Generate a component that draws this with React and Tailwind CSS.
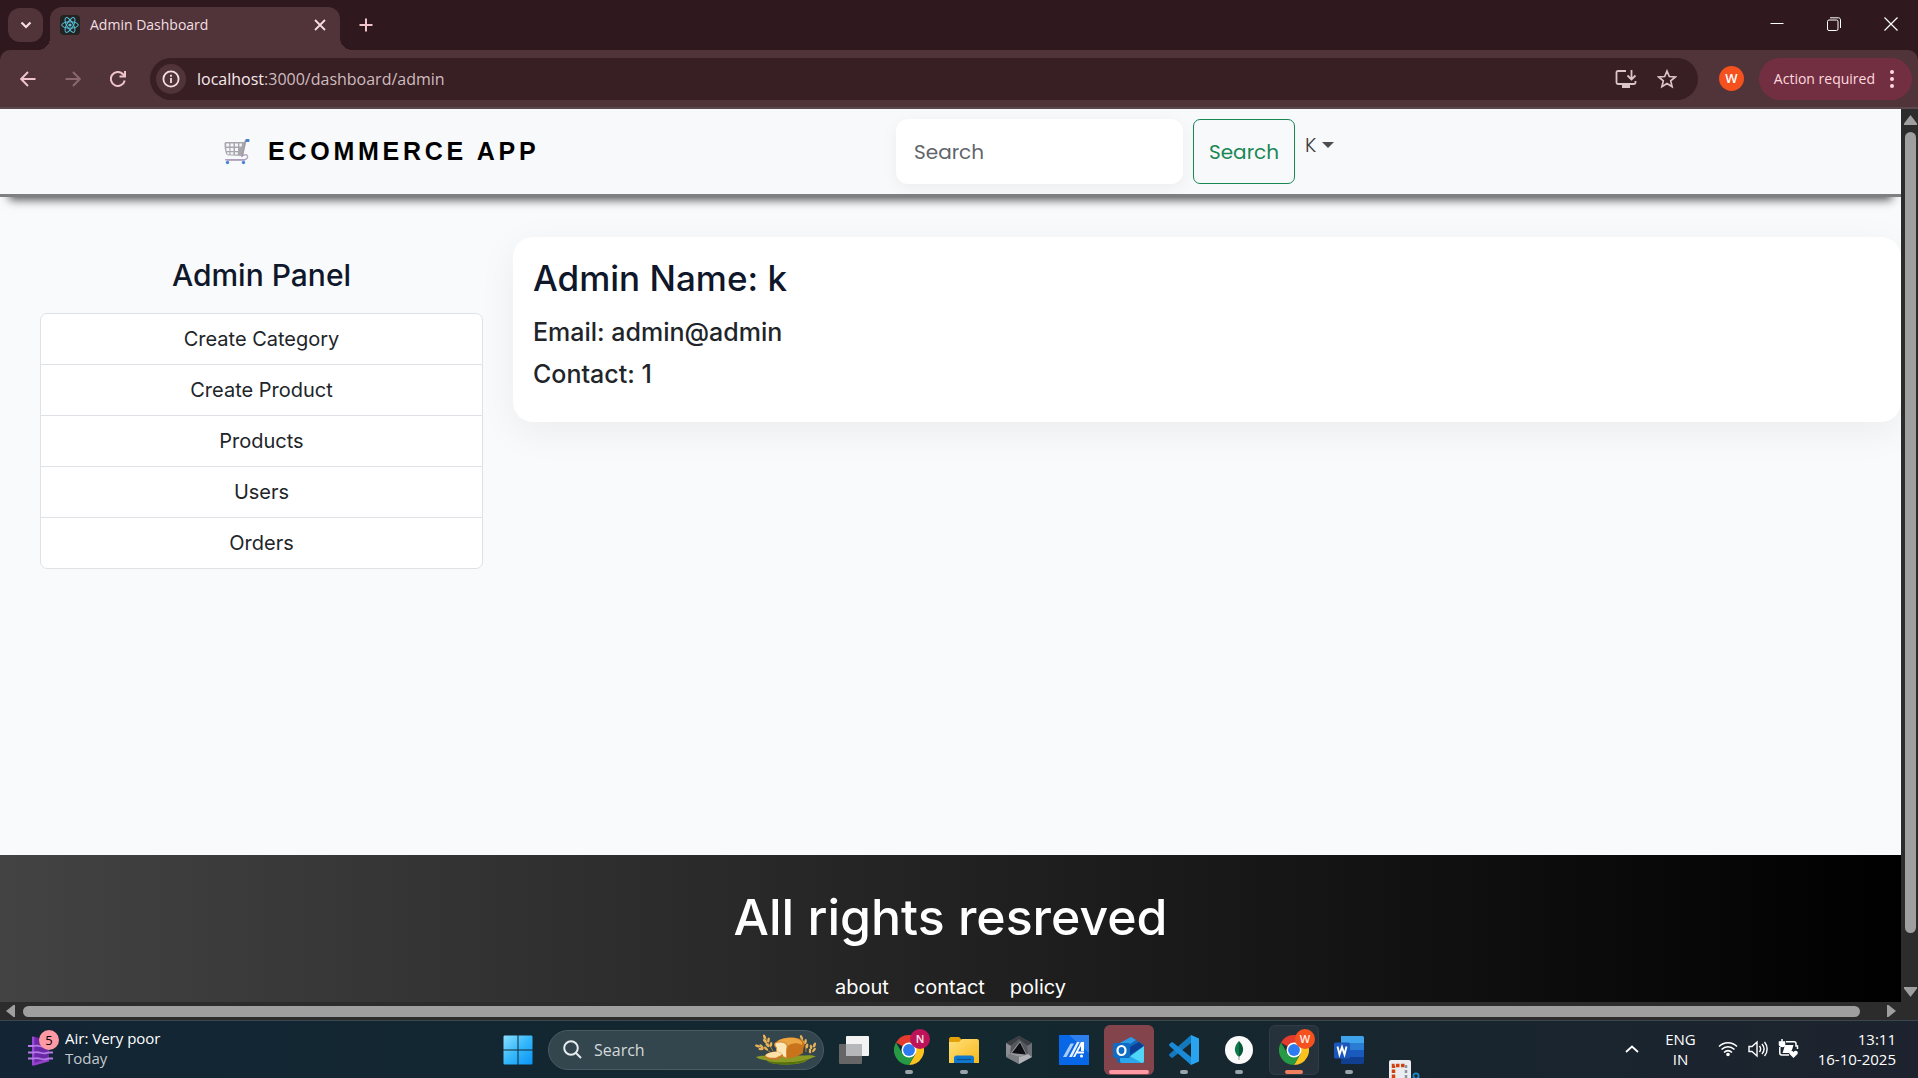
import React from "react";

const UI = "font-['Open_Sans','Noto_Sans',sans-serif]";
const INTER = "font-['Inter',sans-serif]";

const links = ["Create Category", "Create Product", "Products", "Users", "Orders"];

function CartIcon() {
  return (
    <svg width="27" height="27" viewBox="0 0 27 27" fill="none" aria-hidden="true">
      <path d="M1.500 5.500c0-1 .8-1.500 1.800-1.500H22l-3 14-14.500-.8C2.500 17 1.300 9 1.500 5.500z" fill="#aaa6ae" />
      <g fill="#f6f7fa">
        <path d="M3.200 5.600h3v3h-3zM7.500 5.600h3v3h-3zM12 5.600h3v3h-3zM16.400 5.600H19l-.4 3h-2.200zM3.400 10h2.900v3H3.400zM7.500 10h3v3h-3zM12 10h3v3h-3zM4.200 14.200h2.100v2H4.200zM7.500 14.200h3v2.200h-3zM12 14.200h2.800v2.400H12z" />
      </g>
      <path d="M25 2.500h-2.500L19 18c3-2 5-1.500 5.500 0 .8 2.500-2 4-5 4H4" stroke="#b7a6c6" strokeWidth="1.400" />
      <path d="M22.500 3 19 18.500" stroke="#a19da5" strokeWidth="1.800" />
      <path d="M2 21.800h20" stroke="#a99bb9" strokeWidth="1.300" />
      <rect x="22.500" y="1" width="4" height="3" rx="1" fill="#4a80c8" />
      <circle cx="4.500" cy="24.500" r="1.700" fill="#4a86d4" />
      <circle cx="20.500" cy="24.500" r="1.700" fill="#4a86d4" />
    </svg>
  );
}

function ReactLogo() {
  return (
    <svg width="18" height="18" viewBox="0 0 18 18" fill="none" stroke="#58c4dc" strokeWidth="1" aria-hidden="true">
      <ellipse cx="9" cy="9" rx="8.300" ry="3.200" />
      <ellipse cx="9" cy="9" rx="8.300" ry="3.200" transform="rotate(60 9 9)" />
      <ellipse cx="9" cy="9" rx="8.300" ry="3.200" transform="rotate(120 9 9)" />
      <circle cx="9" cy="9" r="1.600" fill="#58c4dc" stroke="none" />
    </svg>
  );
}

function ChromeLogo({ letter, color }) {
  return (
    <span className="relative block size-[30px]">
      <svg width="30" height="30" viewBox="0 0 48 48" aria-hidden="true">
        <path d="M24 24 3.200 12A24 24 0 0 1 44.800 12H24z" fill="#e33b2e" />
        <path d="M24 12h20.800A24 24 0 0 1 24 48l10.400-18z" fill="#fcc31e" />
        <path d="M3.200 12A24 24 0 0 0 24 48l10.400-18-20.800 0z" fill="#269a45" />
        <circle cx="24" cy="24" r="12" fill="#fff" />
        <circle cx="24" cy="24" r="9.500" fill="#2d7bf0" />
      </svg>
      <span className={"absolute -top-1.5 left-4 flex size-5 items-center justify-center rounded-full text-[11px] leading-none font-semibold text-white/90 " + color}>
        {letter}
      </span>
    </span>
  );
}

function Bread() {
  return (
    <svg width="62" height="32" viewBox="0 0 62 32" aria-hidden="true">
      <path d="M1 23c4-2 10-1 16-1.500h28c6 0 12-1 16 1-4 1-5 2-8 3-3 4-14 5-22 5-9 0-17-1-19-4-4-1-8-1-11-3.500z" fill="#8a9a22" />
      <path d="M12 27c8 2 32 2 41-2-3 4-14 5.500-22 5.500-9 0-17-1-19-3.500z" fill="#56720f" />
      <g fill="none" stroke="#b9791f" strokeWidth="1">
        <path d="M18 17C15 12 12 7 10 2M15 18C11 15 6 13 2 12M46 3c3 5 5 9 5 15M60 10c-3 3-5 5-6 9" />
      </g>
      <g fill="#e6b35a">
        <ellipse cx="9.500" cy="3" rx="1.300" ry="2.600" transform="rotate(-20 9.500 3)" />
        <ellipse cx="10" cy="7" rx="1.300" ry="2.600" transform="rotate(-45 10 7)" />
        <ellipse cx="13.500" cy="6" rx="1.300" ry="2.600" transform="rotate(10 13.500 6)" />
        <ellipse cx="12.500" cy="11" rx="1.300" ry="2.600" transform="rotate(-45 12.500 11)" />
        <ellipse cx="16" cy="10.500" rx="1.300" ry="2.600" transform="rotate(10 16 10.500)" />
        <ellipse cx="2.500" cy="12" rx="2.600" ry="1.200" transform="rotate(15 2.500 12)" />
        <ellipse cx="6.500" cy="12.300" rx="2.600" ry="1.200" transform="rotate(45 6.500 12.300)" />
        <ellipse cx="6" cy="15" rx="2.600" ry="1.200" />
        <ellipse cx="11" cy="14.500" rx="2.600" ry="1.200" transform="rotate(45 11 14.500)" />
        <ellipse cx="46.500" cy="3.500" rx="1.300" ry="2.600" transform="rotate(-25 46.500 3.500)" />
        <ellipse cx="47.500" cy="8" rx="1.300" ry="2.600" transform="rotate(-45 47.500 8)" />
        <ellipse cx="50.500" cy="7.500" rx="1.300" ry="2.600" transform="rotate(10 50.500 7.500)" />
        <ellipse cx="52" cy="12" rx="1.300" ry="2.600" transform="rotate(10 52 12)" />
        <ellipse cx="59.500" cy="11" rx="1.300" ry="2.600" transform="rotate(20 59.500 11)" />
        <ellipse cx="56" cy="13" rx="1.200" ry="2.400" transform="rotate(-10 56 13)" />
        <ellipse cx="59" cy="16" rx="1.200" ry="2.600" transform="rotate(40 59 16)" />
        <ellipse cx="55" cy="17" rx="1.200" ry="2.400" transform="rotate(-5 55 17)" />
      </g>
      <path d="M21 8C26 3 38 2.500 44 4.500c4 1.500 6 4.500 5 7.500-.5 2-1 3-1 7-5 3.500-11 5-17 5.500L22 18z" fill="#c9741c" />
      <path d="M22 7.500C27 3.500 38 3 43 5c4 2 5 4 4 6-5-3-10-2-15 1z" fill="#eaa643" />
      <path d="M20 8.500c4-2 10-1.500 12 1.500 1.500 2.500.5 4 0 5.500v9L21 20v-6c-2-1.500-2.500-4-1-5.500z" fill="#d89038" />
      <path d="M20.800 9.300c3.500-1.500 8.700-1 10.200 1.500 1.200 2 .2 3.200 0 4.700v7.700l-9-3.700v-6c-1.800-1.500-2-3-1.200-4.200z" fill="#fce7b8" />
      <path d="M10 22c0-2 5-4 10-4.500 4-.5 7 1.500 8 3.500 1 1.500-3 3-5 4.500-4 1-13 0-13-3.500z" fill="#c97a28" />
      <path d="M10.500 21c2-2 6-3 9.500-3.300 4-.3 7 1 7 2.500-1 1.500-4 2-6 3.500-4 .5-10.500-.2-10.500-2.700z" fill="#fbe0a8" />
    </svg>
  );
}

function FolderIcon() {
  return (
    <svg width="30" height="30" viewBox="0 0 30 30" aria-hidden="true">
      <path d="M0 4c0-1 .8-2 2-2h8l3 3v5H0z" fill="#e3a008" />
      <path d="M0 7h10l3-3h15c1 0 2 .8 2 2v22H0z" fill="url(#folder)" />
      <path d="M5 28v-5c0-1.500 1-2.500 2.500-2.500h15c1.500 0 2.500 1 2.500 2.500v5z" fill="#1078cc" />
      <path d="M8 24.500h14" stroke="#0a4f90" strokeWidth="1.200" />
      <defs>
        <linearGradient id="folder" x1="0" y1="0" x2="1" y2="1">
          <stop stopColor="#ffe07a" />
          <stop offset="1" stopColor="#f7b91c" />
        </linearGradient>
      </defs>
    </svg>
  );
}

function CubeIcon() {
  return (
    <svg width="28" height="30" viewBox="0 0 28 30" aria-hidden="true">
      <path d="M14 1 27 8v14l-13 7L1 22V8z" fill="#55585d" />
      <path d="M14 1 1 8l4 3 9-7 9 7 4-3z" fill="#3b3e43" />
      <path d="M1 8l5 3-1 8-4 3z" fill="#8b8e93" />
      <path d="M27 8l-5 3 1 8 4 3z" fill="#6c7076" />
      <path d="M14 29 1 22l4-3 9 3z" fill="#7b7e83" />
      <path d="M14 29l13-7-4-3-9 3z" fill="#b0b2b6" />
      <path d="M15 6 5 19l9 3 8-2z" fill="#94979b" />
      <path d="M15 7.500 21 19.500 7 18z" fill="#0c0e11" />
    </svg>
  );
}

function BlueAIcon() {
  return (
    <svg width="30" height="30" viewBox="0 0 30 30" aria-hidden="true">
      <rect width="30" height="30" fill="#0767e6" />
      <path d="M10 0h20v18z" fill="#4a94f2" opacity=".55" />
      <path d="M4 22 11.500 8.500H15L7.500 22z" fill="#a9ccfa" />
      <path d="M10 22 18 7h2.500l-7.500 15z" fill="#e4efff" />
      <path d="M16 22l6-11v5h3V7h-3l-8 15z" fill="#fff" />
      <path d="M18.500 16.500H25v2h-7.500z" fill="#fff" />
      <circle cx="22.500" cy="21" r="1.500" fill="#fff" />
    </svg>
  );
}

function OutlookIcon() {
  return (
    <svg width="32" height="30" viewBox="0 0 32 30" aria-hidden="true">
      <path d="M4 10 18 2l13 8v16c0 1.500-1 2-2 2H7c-2 0-3-1-3-2z" fill="#1267b8" />
      <path d="M5 9 18 2l5 3L8 15z" fill="#2e9be8" />
      <path d="M10 16 26 7l5 4-16 10z" fill="#0c3f94" />
      <path d="M31 11v15c0 1.500-1 2-2 2H8z" fill="#4fd5f7" />
      <path d="M7 22v4c0 1.500 1 2 2 2h20l-14-8z" fill="#29a6ec" />
      <rect x="0" y="8" width="17" height="15" rx="1.500" fill="#0f6cc4" />
      <ellipse cx="8.500" cy="15.500" rx="4" ry="4.500" fill="none" stroke="#fff" strokeWidth="2.200" />
    </svg>
  );
}

function VsCodeIcon() {
  return (
    <svg width="30" height="30" viewBox="0 0 30 30" aria-hidden="true">
      <path d="M22 0 30 3.500v23L22 30z" fill="#29a5f0" />
      <path d="M22 0v8L4 22.500c-.6.500-1.200.5-1.800 0L.5 21c-.6-.6-.6-1.300 0-1.900z" fill="#1478bd" />
      <path d="M22 30v-8L4 7.500C3.400 7 2.800 7 2.200 7.500L.5 9c-.6.600-.6 1.300 0 1.900z" fill="#1b8ad6" />
    </svg>
  );
}

function MongoIcon() {
  return (
    <svg width="28" height="28" viewBox="0 0 28 28" aria-hidden="true">
      <circle cx="14" cy="14" r="14" fill="#fafafa" />
      <path d="M14 5c-6 6-5 12 0 16z" fill="#0d7a4a" />
      <path d="M14 5c6 6 5 12 0 16z" fill="#07553a" />
      <path d="M14 20.500V24" stroke="#8fa09a" strokeWidth="1" />
    </svg>
  );
}

function WordIcon() {
  return (
    <svg width="30" height="28" viewBox="0 0 30 28" aria-hidden="true">
      <path d="M7 0h21c1 0 2 .5 2 1.500V7H7z" fill="#3fa3ec" />
      <path d="M7 7h23v7H7z" fill="#2b7cd3" />
      <path d="M7 14h23v7H7z" fill="#185abd" />
      <path d="M7 21h23v5.500c0 1-1 1.500-2 1.500H7z" fill="#103f91" />
      <rect y="6.500" width="16" height="16" rx="1.500" fill="#1a56bb" />
      <path d="m3.500 10.500 2 8 2.500-7.500 2.500 7.500 2-8" fill="none" stroke="#fff" strokeWidth="1.900" />
    </svg>
  );
}

function SnipIcon() {
  return (
    <svg width="32" height="18" viewBox="0 0 32 18" aria-hidden="true">
      <rect x="1" y="0" width="22" height="22" rx="2" fill="#e9edf1" />
      <path d="M5.500 18V5.500H18" stroke="#d3400f" strokeWidth="3.500" strokeDasharray="3.500 1.500" fill="none" />
      <path d="M18 5v13" stroke="#8d949b" strokeWidth="2.500" strokeDasharray="3 2" />
      <circle cx="28" cy="16" r="2.600" fill="none" stroke="#1d87c4" strokeWidth="1.800" />
    </svg>
  );
}

function TaskViewIcon() {
  return (
    <svg width="30" height="28" viewBox="0 0 30 28" aria-hidden="true">
      <rect x="7" y="0" width="23" height="20" rx="1" fill="#f3f3f3" />
      <rect x="0" y="8" width="23" height="20" rx="1" fill="#666" />
      <rect x="7" y="8" width="16" height="12" fill="#b5b7b8" />
    </svg>
  );
}

const apps = [
  { name: "Task view", icon: <TaskViewIcon /> },
  { name: "Chrome N", icon: <ChromeLogo letter="N" color="bg-[#bd1459]" />, dot: true },
  { name: "File Explorer", icon: <FolderIcon />, dot: true },
  { name: "Cursor", icon: <CubeIcon /> },
  { name: "MyASUS", icon: <BlueAIcon /> },
  { name: "Outlook", icon: <OutlookIcon />, tile: "bg-[#83454b]", bar: "w-10 bg-[#ff99a4]" },
  { name: "VS Code", icon: <VsCodeIcon />, dot: true },
  { name: "MongoDB Compass", icon: <MongoIcon />, dot: true },
  { name: "Chrome W", icon: <ChromeLogo letter="W" color="bg-[#f4511e]" />, tile: "bg-[#25323b] ring-1 ring-inset ring-white/5", bar: "w-[18px] bg-[#f08060]" },
  { name: "Word", icon: <WordIcon />, dot: true },
];

function BrowserChrome() {
  return (
    <div className={"shrink-0 bg-[#2f191e] text-[#f3dfe2] " + UI}>
      <div className="flex h-[50px] items-start pl-2">
        <button aria-label="Search tabs" className="mt-2 flex h-[34px] w-[35px] items-center justify-center rounded-xl bg-[#503439]">
          <svg width="12" height="8" viewBox="0 0 12 8" fill="none" stroke="#f3dfe2" strokeWidth="2.200"><path d="m1.500 1.500 4.500 4.500 4.500-4.500" /></svg>
        </button>
        <div className="relative mt-[7px] ml-[7px] flex h-[43px] w-[290px] items-center rounded-t-xl bg-[#503439] pr-3.5 pb-[7px] pl-2.5">
          <span className="absolute bottom-0 -left-3 size-3 bg-[radial-gradient(circle_at_0_0,transparent_12px,#503439_12px)]" />
          <span className="absolute -right-3 bottom-0 size-3 bg-[radial-gradient(circle_at_100%_0,transparent_12px,#503439_12px)]" />
          <span className="flex size-5 items-center justify-center rounded-sm bg-[#232323]"><ReactLogo /></span>
          <span className="ml-2.5 flex-1 text-sm">Admin Dashboard</span>
          <button aria-label="Close tab">
            <svg width="12" height="12" viewBox="0 0 12 12" stroke="#f3dfe2" strokeWidth="1.800"><path d="m1 1 10 10M11 1 1 11" /></svg>
          </button>
        </div>
        <button aria-label="New tab" className="mt-[18px] ml-[19px]">
          <svg width="14" height="14" viewBox="0 0 14 14" stroke="#f0c4cb" strokeWidth="2"><path d="M7 0.500v13M.5 7h13" /></svg>
        </button>
        <div className="mt-[17px] mr-5 ml-auto flex items-center gap-[43px] text-white">
          <button aria-label="Minimize"><svg width="14" height="14" viewBox="0 0 14 14" stroke="currentColor"><path d="M.5 6.500h13" /></svg></button>
          <button aria-label="Restore"><svg width="14" height="14" viewBox="0 0 14 14" fill="none" stroke="currentColor"><rect x=".5" y="3" width="10.500" height="10.500" rx="1.500" /><path d="M3 .8h8.500c1 0 2 .8 2 2V11" /></svg></button>
          <button aria-label="Close"><svg width="14" height="14" viewBox="0 0 14 14" stroke="currentColor" strokeWidth="1.200"><path d="m.5.500 13 13M13.500.500l-13 13" /></svg></button>
        </div>
      </div>
      <div className="flex h-[59px] items-center rounded-t-[10px] border-b-2 border-[#5b484c] bg-[#503439] pr-1.5 pl-5">
        <button aria-label="Back"><svg width="16" height="16" viewBox="0 0 16 16" fill="none" stroke="#f0c4cb" strokeWidth="1.900"><path d="M15.500 8H1.500M8 1 1.200 8 8 15" /></svg></button>
        <button aria-label="Forward" className="ml-[29px]"><svg width="16" height="16" viewBox="0 0 16 16" fill="none" stroke="#8b686f" strokeWidth="1.900"><path d="M.5 8h14M8 1l6.800 7L8 15" /></svg></button>
        <button aria-label="Reload" className="ml-[29px]"><svg width="16" height="16" viewBox="0 0 16 16" fill="none" stroke="#f0c4cb" strokeWidth="2"><path d="M14.700 9.500A7 7 0 1 1 13 3.200l1.500 1.600" /><path d="M15 0v5.500H9.500" /></svg></button>
        <div className="ml-6 flex h-[42px] flex-1 items-center rounded-full bg-[#371f24] pr-[21px] pl-1.5">
          <span className="flex size-[30px] items-center justify-center rounded-full bg-[#503439]">
            <svg width="18" height="18" viewBox="0 0 18 18" fill="none" stroke="#f3dfe2" strokeWidth="1.800"><circle cx="9" cy="9" r="7.600" /><path d="M9 8v5M9 4.800v2" /></svg>
          </span>
          <span className="ml-[11px] flex-1 text-base text-[#cfbcbf]"><span className="text-[#f8e8ea]">localhost</span>:3000/dashboard/admin</span>
          <button aria-label="Install app" className="mr-5">
            <svg width="22" height="20" viewBox="0 0 22 20" fill="none" stroke="#dcc5c9" strokeWidth="1.800"><path d="M11 2H3c-1 0-1.500.5-1.500 1.500v10c0 1 .5 1.500 1.500 1.500h16c1 0 1.500-.5 1.500-1.500V12" /><path d="M7 17.500h8" strokeWidth="3" /><path d="M16.500 1v9M12.500 6.500l4 4 4-4" /></svg>
          </button>
          <button aria-label="Bookmark">
            <svg width="20" height="20" viewBox="0 0 20 20" fill="none" stroke="#dcc5c9" strokeWidth="1.700"><path d="m10 2 2.300 5.500 6 .5-4.600 3.900 1.400 5.800L10 14.600l-5.100 3.100 1.400-5.800L1.700 8l6-.5z" /></svg>
          </button>
        </div>
        <span className="ml-[21px] flex size-[25px] items-center justify-center rounded-full bg-[#f4511e] text-[13px] leading-none font-semibold text-white">W</span>
        <button className="ml-[15px] flex h-[42px] items-center gap-[15px] rounded-full bg-[#732f42] pr-[18px] pl-[15px] text-sm text-[#ffd9df]">
          Action required
          <svg width="4" height="18" viewBox="0 0 4 18" fill="#ffd9df"><circle cx="2" cy="2" r="2" /><circle cx="2" cy="9" r="2" /><circle cx="2" cy="16" r="2" /></svg>
        </button>
      </div>
    </div>
  );
}

function Page() {
  return (
    <div className={"flex min-w-0 flex-1 flex-col bg-[#f9fafc] " + INTER}>
      <header className="relative flex items-start border-b-[3px] border-[#808080] bg-[#f8f9fb] py-2.5 pl-[223px] text-xl shadow-[0_12px_9px_-9px_rgba(0,0,0,0.65)]">
        <a href="#home" className="flex h-[65px] w-[673px] items-center gap-[18px] font-['Liberation_Sans',Arial,sans-serif] text-[25px] font-bold tracking-[0.15em] text-black">
          <CartIcon />
          ECOMMERCE APP
        </a>
        <form className="flex gap-2.5" onSubmit={(e) => e.preventDefault()}>
          <input type="search" aria-label="Search" placeholder="Search" className="h-[65px] w-[287px] rounded-xl bg-white px-[18px] font-['Poppins','Inter',sans-serif] shadow-[0_4px_16px_rgba(0,0,0,0.05)] outline-none placeholder:text-[#5f656b]" />
          <button className="h-[65px] w-[102px] rounded-[7px] border border-[#198754] font-['Poppins','Inter',sans-serif] text-[#198754]">Search</button>
        </form>
        <button className="mt-[11px] ml-2.5 flex items-center gap-1.5 font-['Poppins','Inter',sans-serif] leading-[30px] font-light text-[#3d3d3f]">
          K
          <svg width="12" height="6" viewBox="0 0 12 6" fill="#4d4d4f"><path d="M0 0h12L6 6z" /></svg>
        </button>
      </header>

      <main className="flex flex-1 items-start gap-[30px] pl-10">
        <aside className="w-[443px] shrink-0 pt-[60px] text-center">
          <h4 className="mb-5 text-[30px] leading-9 font-medium text-[#0f172a]">Admin Panel</h4>
          <nav className="divide-y divide-[#dee2e6] overflow-hidden rounded-[7px] border border-[#dee2e6] bg-white">
            {links.map((l) => (
              <a key={l} href="#admin" className="block py-2.5 text-xl leading-[30px] text-[#212529]">{l}</a>
            ))}
          </nav>
        </aside>
        <section className="mt-10 flex-1 rounded-[20px] bg-white px-5 pt-5 pb-[33px] font-medium text-[#212529] shadow-[0_10px_38px_rgba(0,0,0,0.06)]">
          <h3 className="mb-[18px] text-[35px] leading-[42px] text-[#0f172a]">Admin Name: k</h3>
          <p className="mb-3 text-[25px] leading-[30px]">Email: admin@admin</p>
          <p className="text-[25px] leading-[30px]">Contact: 1</p>
        </section>
      </main>

      <footer className="bg-[linear-gradient(to_right,#434343,#000)] pt-8 text-center text-white">
        <h1 className="text-[50px] leading-[60px] font-medium">All rights resreved</h1>
        <nav className="mt-[25px] flex justify-center gap-[25px] text-xl leading-[30px]">
          <a href="#about">about</a>
          <a href="#contact">contact</a>
          <a href="#policy">policy</a>
        </nav>
      </footer>
    </div>
  );
}

function Taskbar() {
  return (
    <footer className={"flex h-[58px] shrink-0 items-center border-t border-[#3a474c] bg-linear-to-r from-[#132534] via-[#13282f] to-[#1d232e] text-[15px] leading-5 text-white " + UI}>
      <button className="flex w-[493px] items-center gap-1.5 pb-[3px] pl-7 text-left">
        <span className="relative block h-9 w-[31px]">
          <svg width="26" height="32" viewBox="0 0 26 32" className="mt-1.5" fill="none" aria-hidden="true">
            <path d="M4 0 21 5v20L4 30z" fill="#6b2aa5" />
            <path d="M5.200 1v28" stroke="#9c48d6" strokeWidth="2.400" />
            <path d="M5 28.500 21 24" stroke="#9240c9" strokeWidth="2.500" />
            <path d="M0 10h6c5-2 9 3 14 0h4M0 16.500h6c5-2 9 3 14 0h5M0 22.500h6c5-2 9 3 14 0h5" stroke="#b57be8" strokeWidth="1.800" />
          </svg>
          <span className="absolute top-0 left-[11px] flex size-5 items-center justify-center rounded-full bg-[#ff99a4] text-[13px] leading-none text-black">5</span>
        </span>
        <span>
          <span className="block">Air: Very poor</span>
          <span className="block text-[#c3c9cc]">Today</span>
        </span>
      </button>
      <nav aria-label="Taskbar" className="flex items-center gap-[5px]">
        <button aria-label="Start" className="flex size-[50px] items-center justify-center">
          <svg width="30" height="30" viewBox="0 0 30 30">
            <defs><linearGradient id="win" x1="0" y1="0" x2="1" y2="1"><stop stopColor="#8be0ff" /><stop offset=".5" stopColor="#35b8fb" /><stop offset="1" stopColor="#0a93f5" /></linearGradient></defs>
            <path fill="url(#win)" d="M2 .500h12.500v14H.5V2c0-1 .5-1.500 1.500-1.500zM15.500.500H28c1 0 1.500.5 1.500 1.500v12.500h-14zM.5 15.500h14v14H2c-1 0-1.500-.5-1.500-1.500zM15.500 15.500h14V28c0 1-.5 1.500-1.500 1.500H15.500z" />
          </svg>
        </button>
        <label className="flex h-10 w-[276px] items-center rounded-full border border-[#4a5b62] bg-[#33454d] pr-1.5 pl-[14px]">
          <svg width="19" height="19" viewBox="0 0 19 19" fill="none" stroke="#e8ecee" strokeWidth="2"><circle cx="8" cy="8" r="6.800" /><path d="m13 13 5 5" /></svg>
          <input aria-label="Search Windows" placeholder="Search" className="ml-3 min-w-0 flex-1 bg-transparent text-base outline-none placeholder:text-[#d3d9dc]" />
          <Bread />
        </label>
        {apps.map((a) => (
          <button key={a.name} aria-label={a.name} className={"relative flex size-[50px] items-center justify-center rounded-md " + (a.tile || "")}>
            {a.icon}
            {a.dot && <span className="absolute bottom-px left-[21px] h-1 w-2 rounded-full bg-[#9aa3a7]" />}
            {a.bar && <span className="absolute inset-x-0 bottom-px flex justify-center"><span className={"h-1 rounded-full " + a.bar} /></span>}
          </button>
        ))}
        <button aria-label="Snipping Tool" className="flex h-[57px] w-[50px] items-end justify-center">
          <SnipIcon />
        </button>
      </nav>
      <div className="mr-[22px] ml-auto flex items-center pb-px text-center">
        <button aria-label="Hidden icons" className="mr-[26px]"><svg width="14" height="8" viewBox="0 0 14 8" fill="none" stroke="#fff" strokeWidth="1.800"><path d="m1 7 6-5.500L13 7" /></svg></button>
        <button>ENG<br />IN</button>
        <span className="mr-[19px] ml-[22px] flex items-center gap-2.5">
          <svg width="20" height="16" viewBox="0 0 20 16" fill="none" stroke="#fff" strokeWidth="1.500"><path d="M1 5.500c5-5 13-5 18 0M3.500 8.500c3.700-3.700 9.300-3.700 13 0M6 11.500c2.400-2.400 5.600-2.400 8 0" /><circle cx="10" cy="13.500" r="1.800" fill="#fff" stroke="none" /></svg>
          <svg width="20" height="18" viewBox="0 0 20 18" fill="none" stroke="#fff" strokeWidth="1.400"><path d="M1 6.500v5h3l5 4.500V2L4 6.500zM11.500 6c1.500 2 1.500 4 0 6M14 4c2.500 3 2.500 7 0 10M16.500 2c3.500 4 3.500 10 0 14" /></svg>
          <svg width="21" height="20" viewBox="0 0 21 20" fill="none" stroke="#fff" strokeWidth="1.500"><path d="M8 2.800h8c1.500 0 2 .7 2 2V7h1.500v3M1.800 8v6c0 1.500.7 2 2 2H11" /><path d="M7 6h8.500l-1.500 5-3 3H4.500l1-3z" fill="#fff" stroke="none" /><path d="M4 0v3M1.500 3h5v3c0 2-4 2-5 0z" fill="#fff" /><path d="m15.500 19-4-4c-1.500-2.500 2-5 4-2 2-3 5.500-.5 4 2z" fill="#fff" stroke="none" /></svg>
        </span>
        <button className="text-right">13:11<br />16-10-2025</button>
      </div>
    </footer>
  );
}

export default function App() {
  return (
    <div className="flex h-screen flex-col overflow-hidden">
      <BrowserChrome />
      <div className="flex min-h-0 flex-1 bg-[#2c2c2c]">
        <Page />
        <div className="relative z-10 flex w-[17px] shrink-0 flex-col items-center bg-[#2c2c2c] pt-1.5 pb-[5px] pl-0.5">
          <svg width="13" height="10" viewBox="0 0 13 10" fill="#9f9f9f"><path d="M6.500 0 13 8.500V10H0V8.500z" /></svg>
          <div className="mt-[7px] w-[11px] flex-1 rounded-full bg-[#9f9f9f]" />
          <svg width="13" height="10" viewBox="0 0 13 10" fill="#9f9f9f" className="mt-[54px]"><path d="M6.500 10 13 1.500V0H0v1.500z" /></svg>
        </div>
      </div>
      <div className="flex h-[18px] shrink-0 items-center bg-[#2c2c2c] pr-[22px] pl-1.5">
        <svg width="9" height="12" viewBox="0 0 9 12" fill="#9f9f9f"><path d="M0 6 7.500 0H9v12H7.500z" /></svg>
        <div className="mr-[27px] ml-2 h-[11px] flex-1 rounded-full bg-[#9f9f9f]" />
        <svg width="9" height="12" viewBox="0 0 9 12" fill="#9f9f9f"><path d="M9 6 1.500 0H0v12h1.500z" /></svg>
      </div>
      <Taskbar />
    </div>
  );
}
